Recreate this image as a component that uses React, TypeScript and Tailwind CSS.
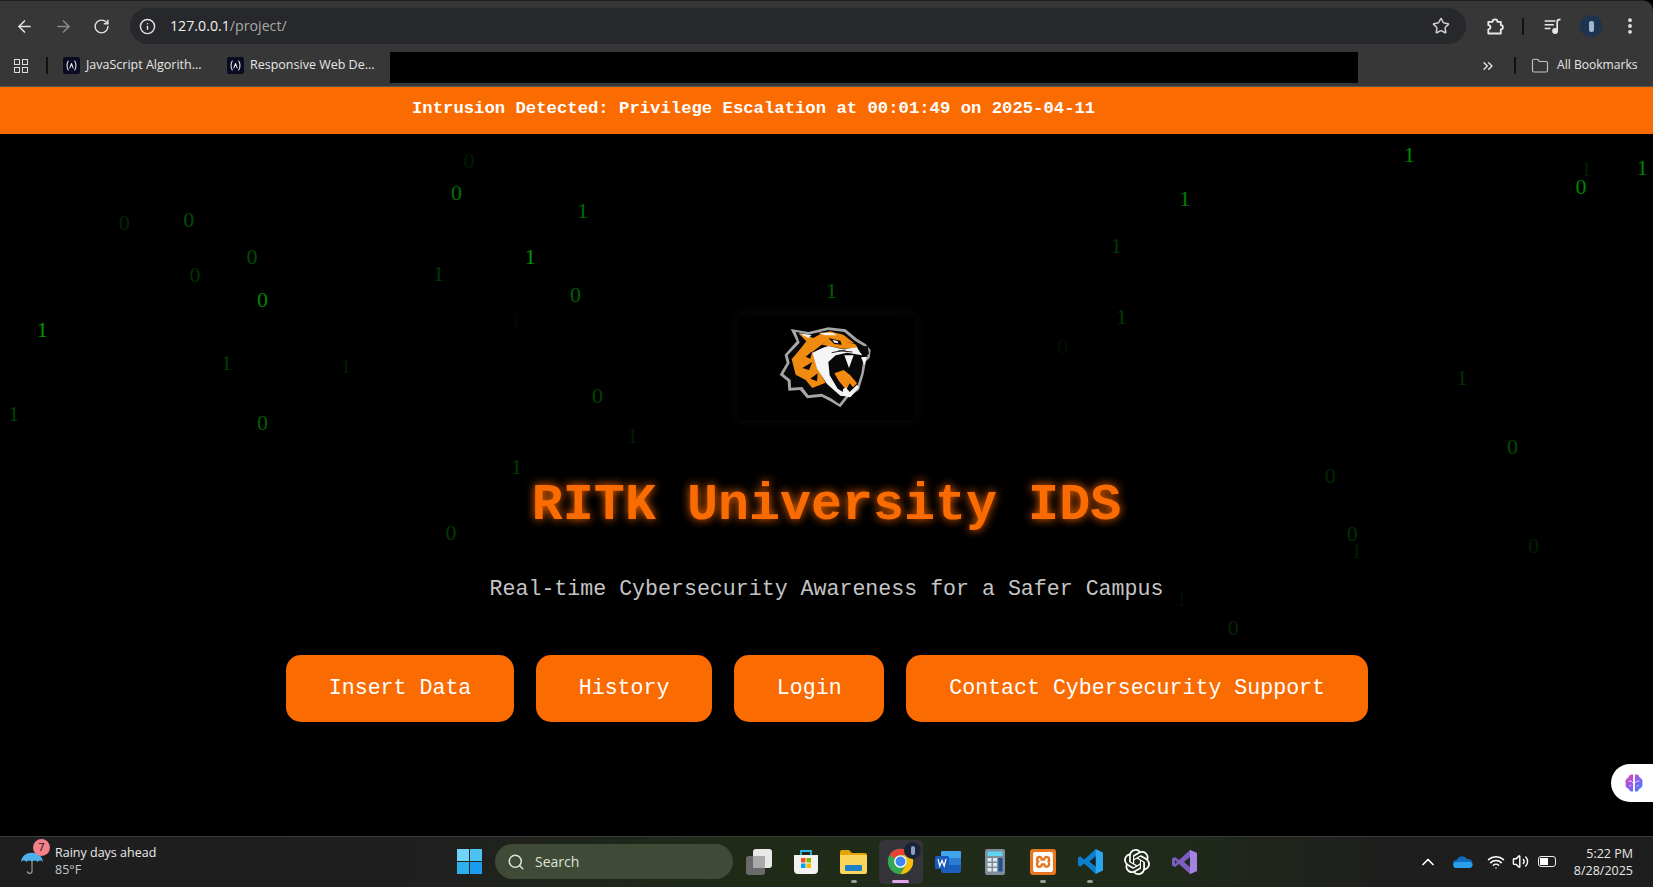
import { ArrowLeft, ArrowRight, RotateCw, Info, Star, MoreVertical, ChevronsRight, Folder, Search, ChevronUp, Wifi, Volume2 } from "lucide-react";
import { SiOpenai, SiXampp } from "react-icons/si";

const digits: [number, number, string, number][] = [
  [445,153,"0",.15],[433,183,"0",.6],[553,200,"1",.6],[118,212,"0",.2],[179,209,"0",.4],[239,244,"0",.4],[185,261,"0",.25],
  [503,244,"1",.8],[416,260,"1",.3],[249,285,"0",.7],[546,280,"0",.5],[789,276,"1",.5],[40,313,"1",.8],[215,344,"1",.3],
  [328,347,"1",.15],[13,393,"1",.35],[249,401,"0",.5],[567,376,"0",.35],[600,414,"1",.15],[490,443,"1",.3],[428,506,"0",.3],
  [1337,147,"1",.75],[1124,189,"1",.7],[1059,233,"1",.3],[1064,301,"1",.3],[1008,328,"0",.08],[1505,160,"1",.15],[1500,177,"0",.7],
  [1558,159,"1",.7],[1387,359,"1",.25],[1435,424,"0",.4],[1262,452,"0",.2],[1283,507,"0",.25],[1287,523,"1",.15],[1455,518,"0",.15],
  [1170,596,"0",.2],[1121,568,"1",.08],[489,305,"1",.06],
];

function Favicon() {
  return (
    <span className="flex h-[17px] w-[17px] items-center justify-center rounded-[2px] bg-[#0a0a23]">
      <svg viewBox="0 0 16 16" className="h-[13px] w-[13px]" fill="none" stroke="#e8e8e8" strokeWidth="1.3" strokeLinecap="round" strokeLinejoin="round">
        <path d="M4 2.5C2 6 2 10 4 13.5M12 2.5c2 3.500 2 7.500 0 11M6 11l2-5.500 2 5.500" />
      </svg>
    </span>
  );
}

function Tiger() {
  return (
    <svg viewBox="0 0 315 285" className="h-[95px] w-[105px]">
      <path fill="#a6a6a6" d="M47 33 L100 42 L160 28 L212 34 L246 62 L272 78 L287 96 L284 120 L273 130 L266 168 L252 215 L218 240 L196 268 L166 250 L140 236 L96 241 L75 216 L40 218 L38 190 L14 170 L35 135 L29 110 L65 70Z" />
      <path fill="#070707" d="M62 41 L100 50 L160 36 L208 42 L240 69 L266 84 L279 98 L277 116 L265 126 L259 166 L245 210 L213 233 L193 258 L168 241 L140 227 L100 232 L82 207 L48 209 L47 186 L25 168 L44 135 L38 112 L74 74Z" />
      <path fill="#f08b10" d="M70 46 L115 60 L140 46 L165 40 L205 50 L238 76 L204 72 L170 62 L140 80 L112 102 L126 150 L152 194 L112 210 L92 186 L62 170 L50 124 L80 88 L94 70Z" />
      <path fill="#f08b10" d="M140 80 L170 60 L206 70 L240 78 L250 90 L204 92 L160 84Z" />
      <path fill="#f5f5f5" d="M112 104 L142 90 L160 84 L204 94 L246 88 L262 112 L216 104 L182 112 L160 132 L164 172 L188 212 L226 236 L196 233 L156 198 L126 152Z" />
      <path fill="#f5f5f5" d="M72 46 L110 52 L100 60Z M130 44 L172 44 L186 52 L150 52Z" />
      <path fill="#080808" d="M164 132 L186 116 L216 108 L274 118 L262 132 L250 176 L244 210 L214 222 L188 192 L168 158Z" />
      <path fill="#f08b10" d="M178 166 L206 156 L226 172 L246 196 L234 208 L224 196 L214 216 L192 190Z" />
      <path fill="#f5f5f5" d="M208 112 L236 112 L222 150Z M258 118 L276 116 L268 142Z M204 214 L212 208 L224 222 L246 200 L252 208 L226 238 L202 232Z" />
      <path fill="#080808" d="M160 60 L196 68 L200 80 L178 78Z" />
      <path fill="#e8e8e8" d="M172 65 L188 69 L190 76 L178 74Z" />
      <path fill="#080808" d="M246 86 L278 84 L282 108 L268 112 L256 104Z M92 116 L112 100 L106 122Z M82 150 L112 132 L102 156Z M106 182 L128 166 L126 190Z" />
      <path fill="none" stroke="#222" strokeWidth="3" d="M190 98 L232 102 M170 104 L212 96" />
    </svg>
  );
}

function ChromeIcon() {
  return (
    <svg viewBox="0 0 32 32" className="h-[29px] w-[29px]">
      <circle cx="16" cy="16" r="14" fill="#34a853" />
      <path fill="#ea4335" d="M3.880 9A14 14 0 0 1 28.120 9H16A7 7 0 0 0 9.940 12.500Z" />
      <path fill="#fbbc04" d="M28.120 9A14 14 0 0 1 16 30L22.060 19.500A7 7 0 0 0 16 9Z" />
      <circle cx="16" cy="16" r="7" fill="#fff" />
      <circle cx="16" cy="16" r="5.500" fill="#4285f4" />
    </svg>
  );
}

function Icon({ children, dot, active }: { children: React.ReactNode; dot?: boolean; active?: boolean }) {
  return (
    <div className={`relative flex h-[44px] w-[44px] items-center justify-center rounded-[5px] ${active ? "bg-[#35343a]" : ""}`}>
      {children}
      {dot && <span className="absolute bottom-[1px] left-[19px] h-[3px] w-[6px] rounded-full bg-[#9a9a9a]" />}
      {active && <span className="absolute bottom-[1px] left-[13px] h-[3px] w-[17px] rounded-full bg-[#e2a7e8]" />}
    </div>
  );
}

export default function App() {
  return (
    <div className="flex h-[887px] w-[1653px] flex-col overflow-hidden bg-black [font-family:'Open_Sans',sans-serif]">
      <div className="flex h-[45px] items-center rounded-tr-[10px] border-t border-[#1e1e1e] bg-[#373737] pt-[6px] text-[#e3e3e3]">
        <div className="flex w-[130px] items-center gap-[20px] pl-[15px]">
          <ArrowLeft className="h-[19px] w-[19px]" />
          <ArrowRight className="h-[19px] w-[19px] text-[#8a8a8a]" />
          <RotateCw className="h-[17px] w-[17px]" />
        </div>
        <div className="flex h-[36px] w-[1336px] items-center rounded-full bg-[#27282b] pl-[9px] pr-[16px]">
          <Info className="h-[17px] w-[17px]" />
          <span className="ml-[14px] text-[14.200px] text-[#f0f0f0]">127.0.0.1<span className="text-[#a8a8a8]">/project/</span></span>
          <Star className="ml-auto h-[18px] w-[18px] text-[#d0d0d0]" />
        </div>
        <div className="flex flex-1 items-center pl-[19px]">
          <svg viewBox="0 0 24 24" className="h-[20px] w-[20px]" fill="none" stroke="#e8e8e8" strokeWidth="2.200" strokeLinejoin="round">
            <path d="M4 7h5a3 3 0 0 1 6 0h4v4a2.500 2.500 0 0 1 0 5v5H4v-5a2.500 2.500 0 0 0 0-5Z" />
          </svg>
          <span className="ml-[17px] h-[17px] w-[2px] bg-[#111]" />
          <svg viewBox="0 0 24 24" className="ml-[19px] h-[20px] w-[20px]" fill="none" stroke="#e8e8e8" strokeWidth="2">
            <path d="M2 6h13M2 10.500h11M2 15h7M17 18V7c0-2 2-3 4-3" />
            <circle cx="14.500" cy="18" r="2.500" fill="#e8e8e8" />
          </svg>
          <span className="ml-[17px] flex h-[22px] w-[22px] items-center justify-center rounded-full bg-[#1d3350]">
            <span className="h-[11px] w-[5px] rounded-[2px] bg-[#9fb6d0]" />
          </span>
          <MoreVertical className="ml-[18px] h-[20px] w-[20px]" strokeWidth={2.600} />
        </div>
      </div>

      <div className="flex h-[42px] items-center border-b border-[#555] bg-[#373737] text-[12.500px] text-[#e6e6e6]">
        <div className="ml-[14px] grid h-[14px] w-[14px] grid-cols-2 gap-[2px]">
          <span className="border border-[#dcdcdc]" />
          <span className="border border-[#dcdcdc]" />
          <span className="border border-[#dcdcdc]" />
          <span className="border border-[#dcdcdc]" />
        </div>
        <span className="ml-[18px] h-[17px] w-[2px] bg-[#111]" />
        <div className="ml-[15px] flex w-[164px] items-center gap-[6px]"><Favicon /><span>JavaScript Algorith...</span></div>
        <div className="flex w-[163px] items-center gap-[6px]"><Favicon /><span>Responsive Web De...</span></div>
        <div className="mt-[3px] h-[31px] w-[968px] bg-black" />
        <ChevronsRight className="ml-[122px] h-[16px] w-[16px]" />
        <span className="ml-[18px] h-[17px] w-[2px] bg-[#111]" />
        <Folder className="ml-[15px] h-[18px] w-[18px] text-[#c4c4c4]" strokeWidth={1.500} />
        <span className="ml-[8px] text-[12.100px]">All Bookmarks</span>
      </div>

      <div className="flex h-[47px] items-center bg-[#fa6b02] pb-[4px] pl-[412px] text-[17.250px] font-bold text-white [font-family:'Liberation_Mono',monospace]">
        Intrusion Detected: Privilege Escalation at 00:01:49 on 2025-04-11
      </div>

      <main className="relative flex flex-1 flex-col items-center overflow-hidden bg-black pt-[181px] [font-family:'Liberation_Mono',monospace]">
        {digits.map(([x, y, c, o], i) => (
          <span
            key={i}
            className="absolute -translate-x-1/2 -translate-y-1/2 text-[22px] leading-none text-[#00ff00] [font-family:'Liberation_Serif',serif]"
            style={{ left: x * 1.054, top: y * 1.054 - 134, opacity: o * 0.72 }}
          >
            {c}
          </span>
        ))}
        <div className="relative flex h-[105px] w-[177px] items-center justify-center bg-black pb-[4px] pl-[2px] shadow-[0_0_14px_#0c0c0c]">
          <Tiger />
        </div>
        <h1 className="relative mt-[56px] text-[51.700px] font-bold leading-[60px] text-[#fa6b02] [text-shadow:0_0_10px_#ff6a00]">RITK University IDS</h1>
        <p className="relative mt-[40.500px] text-[21.600px] leading-[25px] text-[#c4c4c4]">Real-time Cybersecurity Awareness for a Safer Campus</p>
        <div className="relative ml-[1px] mt-[53px] flex gap-[21.800px] text-[21.600px] leading-[25px] text-white">
          <button className="rounded-[15px] bg-[#fa6b02] px-[42.800px] pb-[20.500px] pt-[21.500px]">Insert Data</button>
          <button className="rounded-[15px] bg-[#fa6b02] px-[42.800px] pb-[20.500px] pt-[21.500px]">History</button>
          <button className="rounded-[15px] bg-[#fa6b02] px-[42.800px] pb-[20.500px] pt-[21.500px]">Login</button>
          <button className="rounded-[15px] bg-[#fa6b02] px-[43px] pb-[20.500px] pt-[21.500px]">Contact Cybersecurity Support</button>
        </div>
        <div className="absolute left-[1611px] top-[630px] flex h-[38px] w-[42px] items-center rounded-l-full bg-white pl-[12px]">
          <svg viewBox="0 0 24 24" className="h-[22px] w-[22px]">
            <defs>
              <linearGradient id="br" x1="0" x2="1" y1="0" y2="1">
                <stop offset="0" stopColor="#ec4899" />
                <stop offset="0.500" stopColor="#8b5cf6" />
                <stop offset="1" stopColor="#3b82f6" />
              </linearGradient>
            </defs>
            <path fill="url(#br)" d="M11 3C8 2 6 4 6 6 3 7 2 10 3 12c-1 3 1 6 3 6 1 3 3 4 5 3ZM13 3c3-1 5 1 5 3 3 1 4 4 3 6 1 3-1 6-3 6-1 3-3 4-5 3Z" />
            <path fill="none" stroke="#fff" strokeWidth="0.800" d="M6 10h3l2 2M18 10h-3l-2 2M7 15h2M17 15h-2" />
          </svg>
        </div>
      </main>

      <footer className="flex h-[51px] items-center border-t border-[#3a3a3a] bg-[linear-gradient(90deg,#1e1e1e_0%,#1f1f1f_25%,#1f2b17_45%,#202a1a_70%,#1e1e1e_85%)] pb-[1px] text-white">
        <div className="relative flex w-[456px] items-center pl-[20px]">
          <svg viewBox="0 0 26 30" className="h-[28px] w-[24px]">
            <path fill="#4db2ec" d="M1 15C2 8 7 5 13 5s11 3 12 10c-2-2-4-2-6 0-2-2-4-2-6 0-2-2-4-2-6 0-2-2-4-2-6 0Z" />
            <path fill="none" stroke="#9a9a9a" strokeWidth="1.300" d="M13 14v11c0 3-5 3-5 0" />
          </svg>
          <span className="absolute left-[33px] top-[-7px] flex h-[17px] w-[17px] items-center justify-center rounded-full bg-[#f4808a] text-[11px] text-[#111]">7</span>
          <div className="mt-[-2px] ml-[11px] flex flex-col text-[12.500px] leading-[17px] text-[#eaeaea]">
            <span>Rainy days ahead</span>
            <span className="text-[#c8c8c8]">85°F</span>
          </div>
        </div>
        <svg viewBox="0 0 25 25" className="ml-[1px] h-[25px] w-[25px]">
          <rect x="0" y="0" width="12" height="12" fill="#6fd5f8" />
          <rect x="13" y="0" width="12" height="12" fill="#4cc2f1" />
          <rect x="0" y="13" width="12" height="12" fill="#2cb0ef" />
          <rect x="13" y="13" width="12" height="12" fill="#1a9bf0" />
        </svg>
        <div className="ml-[13px] flex h-[35px] w-[238px] items-center rounded-full bg-[#3f4a37] pl-[12px] text-[14px] text-[#dfe3da]">
          <Search className="h-[18px] w-[18px]" />
          <span className="ml-[10px]">Search</span>
        </div>
        <div className="ml-[4px] flex items-center gap-[3.300px]">
          <Icon>
            <span className="relative h-[26px] w-[26px]">
              <span className="absolute bottom-0 left-0 h-[19px] w-[19px] rounded-[3px] bg-[#6a6a6a]" />
              <span className="absolute right-0 top-0 h-[19px] w-[19px] rounded-[3px] bg-[#e8e8e8]" />
              <span className="absolute left-[7px] top-[7px] h-[12px] w-[12px] bg-[#aaa]" />
            </span>
          </Icon>
          <Icon>
            <svg viewBox="0 0 26 26" className="h-[26px] w-[26px]">
              <path fill="none" stroke="#35b6e8" strokeWidth="1.800" d="M8 6V2h10v4" />
              <path fill="#f2f2f2" d="M1 6h24v15a4 4 0 0 1-4 4H5a4 4 0 0 1-4-4Z" />
              <rect x="8" y="9" width="4.500" height="4.500" fill="#f25022" />
              <rect x="13.500" y="9" width="4.500" height="4.500" fill="#7fba00" />
              <rect x="8" y="14.500" width="4.500" height="4.500" fill="#00a4ef" />
              <rect x="13.500" y="14.500" width="4.500" height="4.500" fill="#ffb900" />
            </svg>
          </Icon>
          <Icon dot>
            <svg viewBox="0 0 27 24" className="h-[24px] w-[27px]">
              <path fill="#e0a500" d="M0 2a2 2 0 0 1 2-2h7l3 3h13a2 2 0 0 1 2 2v5H0Z" />
              <path fill="#fbd65a" d="M0 5h27v17a2 2 0 0 1-2 2H2a2 2 0 0 1-2-2Z" />
              <rect x="5" y="15" width="17" height="6" rx="1" fill="#1b82c9" />
            </svg>
          </Icon>
          <Icon active>
            <span className="relative flex">
              <ChromeIcon />
              <span className="absolute right-[-6px] top-[-5px] flex h-[17px] w-[17px] items-center justify-center rounded-full bg-[#1a2436]">
                <span className="h-[9px] w-[4px] rounded-[2px] bg-[#8aa0bc]" />
              </span>
            </span>
          </Icon>
          <Icon>
            <svg viewBox="0 0 26 26" className="h-[26px] w-[26px]">
              <rect x="6" y="2" width="20" height="22" rx="2" fill="#1b5fb8" />
              <rect x="6" y="2" width="20" height="7" rx="1" fill="#41a5ee" />
              <rect x="6" y="9" width="20" height="7" fill="#2b7cd3" />
              <rect x="0" y="7" width="14" height="13" rx="1.500" fill="#185abd" />
              <path fill="none" stroke="#fff" strokeWidth="1.300" d="M3 10l1.800 7 2.200-5.500 2.200 5.500L11 10" />
            </svg>
          </Icon>
          <Icon>
            <svg viewBox="0 0 20 26" className="h-[26px] w-[20px]">
              <rect width="20" height="26" rx="2" fill="#7f8c99" />
              <rect x="2.500" y="2.500" width="15" height="4.500" fill="#5fd3ef" />
              <path fill="#dfe6ec" d="M2.500 9h4v3.500h-4ZM8 9h4v3.500H8ZM2.500 14h4v3.500h-4ZM8 14h4v3.500H8ZM2.500 19h4v3.500h-4ZM8 19h4v3.500H8Z" />
              <rect x="13.500" y="9" width="4" height="13.500" fill="#1d4f91" />
            </svg>
          </Icon>
          <Icon dot>
            <span className="flex h-[26px] w-[26px] items-center justify-center rounded-[3px] bg-[#e8751f]">
              <SiXampp className="h-[20px] w-[20px] text-white" />
            </span>
          </Icon>
          <Icon dot>
            <svg viewBox="0 0 26 26" className="h-[27px] w-[27px]">
              <path fill="#0a7fcd" d="M18 1l7 3.500v17L18 25 7 15l-4 3-2-1.500V9.500L3 8l4 3Z" />
              <path fill="#2ba6ee" d="M18 1l7 3.500v17L18 25Z" />
              <path fill="#1d1f1b" d="M18 8l-6 5 6 5Z" />
            </svg>
          </Icon>
          <Icon>
            <SiOpenai className="h-[26px] w-[26px] text-white" />
          </Icon>
          <Icon>
            <svg viewBox="0 0 26 26" className="h-[26px] w-[26px]">
              <path fill="#7c5cc0" d="M18 1l7 3v18l-7 3L7 15l-4 3-3-1.500v-7L3 8l4 3Z" />
              <path fill="#a582e0" d="M18 1l7 3v18l-7 3Z" />
              <path fill="#1f2a18" d="M18 8l-6 5 6 5ZM3 11v4l2-2Z" />
            </svg>
          </Icon>
        </div>
        <div className="ml-auto flex items-center pr-[20px]">
          <ChevronUp className="h-[20px] w-[20px]" />
          <svg viewBox="0 0 20 13" className="ml-[15px] h-[13px] w-[20px]">
            <path fill="#0f6cbd" d="M4 13a4 4 0 0 1-.5-8A6 6 0 0 1 14 4a4.500 4.500 0 0 1 2 9Z" />
            <path fill="#2aa0ea" d="M3 7h13a3 3 0 0 1 1 6H4a3 3 0 0 1-1-6Z" />
          </svg>
          <Wifi className="ml-[14px] h-[18px] w-[18px]" />
          <Volume2 className="ml-[7px] h-[17px] w-[17px]" />
          <span className="ml-[9px] flex h-[11px] w-[18px] items-center rounded-[3px] border border-[#eee] p-[1px]">
            <span className="h-full w-[8px] bg-white" />
          </span>
          <div className="ml-[19px] flex w-[58px] flex-col items-end text-[12.500px] leading-[17px] text-[#e8e8e8]">
            <span>5:22 PM</span>
            <span>8/28/2025</span>
          </div>
        </div>
      </footer>
    </div>
  );
}
